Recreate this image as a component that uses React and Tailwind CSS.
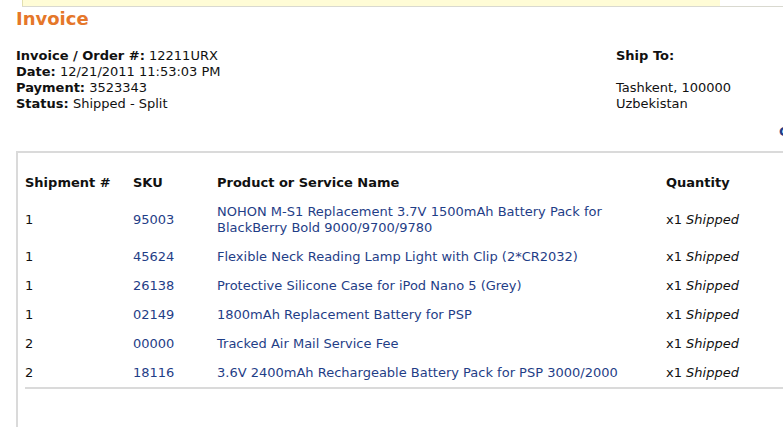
import React from 'react';

const rows = [
    { ship: '1', sku: '95003', name: 'NOHON M-S1 Replacement 3.7V 1500mAh Battery Pack for BlackBerry Bold 9000/9700/9780' },
    { ship: '1', sku: '45624', name: 'Flexible Neck Reading Lamp Light with Clip (2*CR2032)' },
    { ship: '1', sku: '26138', name: 'Protective Silicone Case for iPod Nano 5 (Grey)' },
    { ship: '1', sku: '02149', name: '1800mAh Replacement Battery for PSP' },
    { ship: '2', sku: '00000', name: 'Tracked Air Mail Service Fee' },
    { ship: '2', sku: '18116', name: '3.6V 2400mAh Rechargeable Battery Pack for PSP 3000/2000' },
];

export default function App() {
    return (
        <div className="w-[783px] h-[427px] overflow-hidden bg-white font-['Verdana','DejaVu_Sans',sans-serif] text-[13px] leading-4 text-[#111]">
            {/* notice strip at the top */}
            <div className="ml-[22px] h-[7px] border-b border-[#d9d9d0]">
                <div className="w-[698px] h-full bg-[#fffcd6] border-l border-[#e2dfae]" />
            </div>

            <div className="pl-4 w-[840px]">
                <h1 className="mt-px text-[18px] leading-[22px] font-bold text-[#e5772a]">Invoice</h1>

                <div className="mt-[17.5px] flex">
                    <div className="w-[600px]">
                        <div><b>Invoice / Order #:</b> 12211URX</div>
                        <div><b>Date:</b> 12/21/2011 11:53:03 PM</div>
                        <div><b>Payment:</b> 3523343</div>
                        <div><b>Status:</b> Shipped - Split</div>
                    </div>
                    <div>
                        <div className="font-bold">Ship To:</div>
                        <div>&nbsp;</div>
                        <div>Tashkent, 100000</div>
                        <div>Uzbekistan</div>
                    </div>
                </div>

                <div className="mt-3 ml-[763px]">
                    <a className="text-[#1f3e87] font-bold whitespace-nowrap">Continue Shopping</a>
                </div>

                <div className="mt-[11.5px] h-[300px] border-t-2 border-l-2 border-[#dadada] pt-[15px] pl-[7px]">
                    <div className="w-[800px] border-b-2 border-[#dadada]">
                        <table className="w-full border-collapse table-fixed">
                            <colgroup>
                                <col className="w-[108px]" />
                                <col className="w-[84px]" />
                                <col className="w-[449px]" />
                                <col />
                            </colgroup>
                            <thead>
                                <tr>
                                    <th className="text-left font-bold py-[6.5px]">Shipment #</th>
                                    <th className="text-left font-bold py-[6.5px]">SKU</th>
                                    <th className="text-left font-bold py-[6.5px]">Product or Service Name</th>
                                    <th className="text-left font-bold py-[6.5px]">Quantity</th>
                                </tr>
                            </thead>
                            <tbody>
                                {rows.map((r, i) => (
                                    <tr key={i}>
                                        <td className="py-[6.5px] align-middle">{r.ship}</td>
                                        <td className="py-[6.5px] align-middle text-[#1f3e87]">{r.sku}</td>
                                        <td className="py-[6.5px] pr-[10px] align-middle text-[#1f3e87]">{r.name}</td>
                                        <td className="py-[6.5px] align-middle whitespace-nowrap">x1 <i>Shipped</i></td>
                                    </tr>
                                ))}
                            </tbody>
                        </table>
                    </div>
                </div>
            </div>
        </div>
    );
}
